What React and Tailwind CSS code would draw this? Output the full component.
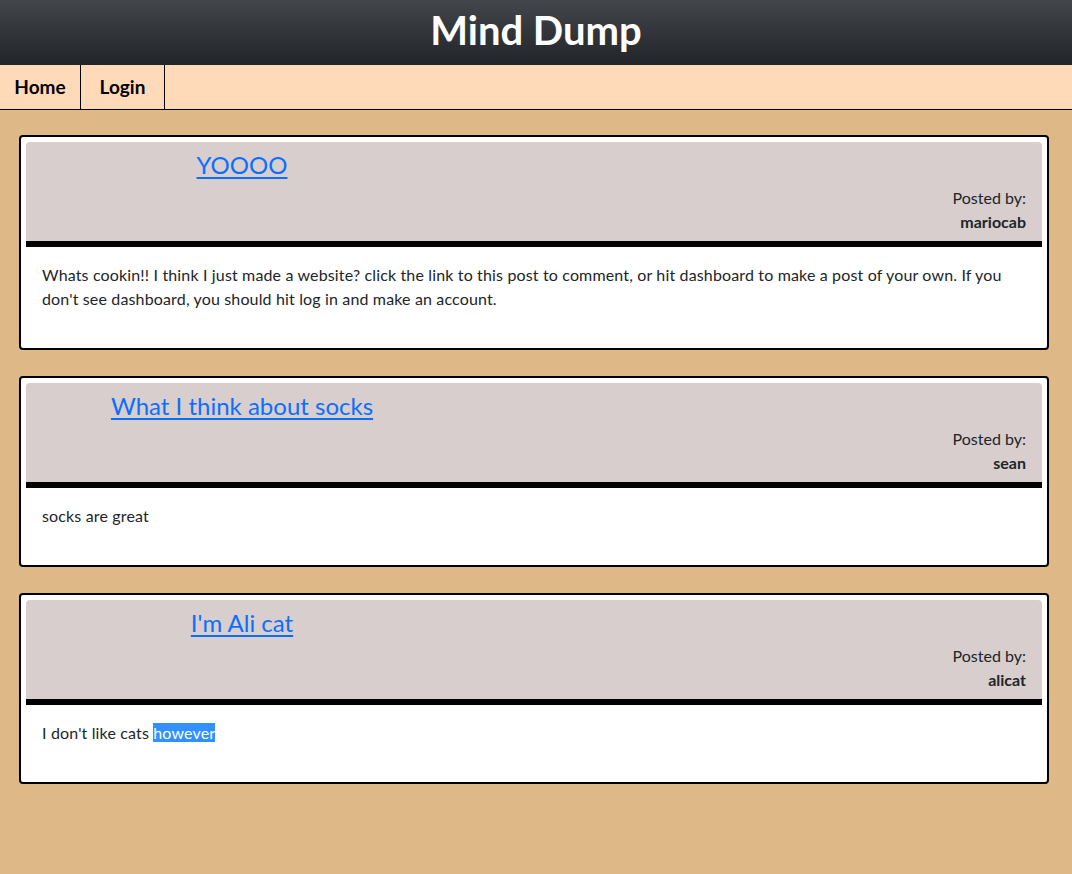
import React from 'react';

const posts = [
    {
        title: 'YOOOO',
        author: 'mariocab',
        body: "Whats cookin!! I think I just made a website? click the link to this post to comment, or hit dashboard to make a post of your own. If you don't see dashboard, you should hit log in and make an account.",
    },
    { title: 'What I think about socks', author: 'sean', body: 'socks are great' },
    { title: "I'm Ali cat", author: 'alicat', body: "I don't like cats", selected: 'however' },
];

const PostCard = ({ post }) => (
    <div className="bg-white border-2 border-black rounded-[4px] px-[5px] pt-[5px]">
        <div className="bg-[#d7cecd] rounded-t-[4px] h-[105px] flex flex-col border-b-[6px] border-black">
            <div className="w-[432px] text-center pt-[7px]">
                <a href="#" className="text-[24px] leading-[32px] text-[#0d6efd] underline underline-offset-[3px]">
                    {post.title}
                </a>
            </div>
            <div className="mt-auto pb-[7px] pr-[16px] text-right text-[16px] leading-[24px] text-[#212529]">
                <div>Posted by:</div>
                <div className="font-bold">{post.author}</div>
            </div>
        </div>
        <div className="px-[16px] pt-[16px] pb-[37px] text-[16px] leading-[24px] tracking-[0.15px] text-[#212529]">
            {post.body}
            {post.selected && (
                <>
                    {' '}
                    <span className="bg-[#3390ff] text-white">{post.selected}</span>
                </>
            )}
        </div>
    </div>
);

const App = () => {
    return (
        <div className="min-h-[874px] bg-[#deb887]" style={{ fontFamily: 'Lato, "Noto Sans", sans-serif' }}>
            <header className="h-[65px] bg-gradient-to-b from-[#43474b] to-[#212529] flex justify-center pt-[8px]">
                <h1 className="text-white font-bold text-[40px] leading-[44px]">Mind Dump</h1>
            </header>
            <nav className="h-[45px] bg-[#ffdab9] border-b border-black flex">
                <a href="#" className="w-[81px] border-r border-black flex items-center justify-center font-bold text-[19px] text-black">
                    Home
                </a>
                <a href="#" className="w-[84px] border-r border-black flex items-center justify-center font-bold text-[19px] text-black">
                    Login
                </a>
            </nav>
            <main className="pl-[19px] pr-[23px] pt-[25px] flex flex-col gap-[26px]">
                {posts.map((post) => (
                    <PostCard key={post.title} post={post} />
                ))}
            </main>
        </div>
    );
};

export default App;
